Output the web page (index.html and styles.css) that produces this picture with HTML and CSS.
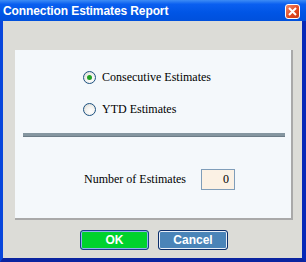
FILE: index.html
```html
<!DOCTYPE html>
<html lang="en">
<head>
  <meta charset="UTF-8" />
  <title>Connection Estimates Report</title>
  <link rel="stylesheet" href="styles.css">
</head>
<body>
  <div class="window">
    <div class="title-bar">
      <span class="title">Connection Estimates Report</span>
      <button type="button" class="close-btn">
        <svg width="9" height="9" viewBox="0 0 9 9"><path d="M1 1 L8 8 M8 1 L1 8" stroke="#fff" stroke-width="2" /></svg>
      </button>
    </div>
    <div class="client">
      <div class="panel">
        <div class="radio-group">
          <label class="radio-row"><span class="radio checked"></span><span class="serif">Consecutive Estimates</span></label>
          <label class="radio-row"><span class="radio"></span><span class="serif">YTD Estimates</span></label>
        </div>
        <div class="separator"></div>
        <div class="number-row">
          <span class="number-label serif">Number of Estimates</span>
          <input type="text" class="number-input serif" value="0" />
        </div>
      </div>
      <div class="buttons">
        <button type="button" class="btn btn-ok">OK</button>
        <button type="button" class="btn btn-cancel">Cancel</button>
      </div>
    </div>
  </div>
</body>
</html>
```

FILE: styles.css
```css
body {
  margin: 0;
  background: #ffffff;
}
.serif {
  font-family: "Liberation Serif", "DejaVu Serif", serif;
  font-size: 12px;
  color: #000;
}
.window {
  width: 306px;
  height: 262px;
  box-sizing: border-box;
  display: flex;
  flex-direction: column;
  background: #0843d8;
  border-left: 3px solid #0846dc;
  border-right: 4px solid #0628b8;
  border-bottom: 4px solid #0a24a0;
}
.title-bar {
  height: 21px;
  margin-left: -3px;
  margin-right: -4px;
  padding: 0 5px 0 3px;
  display: flex;
  align-items: center;
  justify-content: space-between;
  background: linear-gradient(#3d8cf5 0%, #0a5ff0 20%, #0055e5 60%, #0050dc 100%);
}
.title {
  color: white;
  font-family: "Liberation Sans", Arial, sans-serif;
  font-weight: bold;
  font-size: 12px;
  letter-spacing: -0.1px;
  margin-top: 1px;
}
.close-btn {
  width: 15px;
  height: 15px;
  padding: 0;
  border: 1px solid #ffffff;
  border-radius: 3px;
  background: linear-gradient(135deg, #f08a6c, #e0461e 60%, #c83a16);
  display: flex;
  align-items: center;
  justify-content: center;
  margin: 1px 1px 0 0;
}
.client {
  flex: 1;
  background: #dcdcd7;
  padding: 29px 9px 0 12px;
}
.panel {
  width: 276px;
  height: 168px;
  background: #f4f8fb;
  border-right: 2px solid #a9a9a9;
  border-bottom: 2px solid #a9a9a9;
  display: flex;
  flex-direction: column;
}
.radio-group {
  display: flex;
  flex-direction: column;
  gap: 12px;
  padding: 17px 0 0 68px;
}
.radio-row {
  height: 20px;
  display: flex;
  align-items: center;
  gap: 6px;
}
.radio {
  width: 11px;
  height: 11px;
  border: 1px solid #1c5180;
  border-radius: 50%;
  background: radial-gradient(circle at 60% 65%, #ffffff 0%, #f2f2ef 45%, #d4d3cc 100%);
  display: flex;
  align-items: center;
  justify-content: center;
}
.radio.checked::after {
  content: "";
  width: 5px;
  height: 5px;
  border-radius: 50%;
  background: #21a121;
}
.separator {
  height: 4px;
  margin: 14px 6px 0 8px;
  background: #8596a0;
  border-bottom: 1px solid #6d7d88;
  box-sizing: border-box;
}
.number-row {
  display: flex;
  align-items: center;
  margin-top: 32px;
  padding-left: 69px;
}
.number-label {
  width: 117px;
  white-space: nowrap;
}
.number-input {
  width: 34px;
  height: 21px;
  box-sizing: border-box;
  border: 1px solid #7f9db9;
  background: #fbf1e4;
  text-align: right;
  padding: 0 5px;
}
.buttons {
  display: flex;
  gap: 9px;
  margin-top: 10px;
  padding-left: 65px;
}
.btn {
  height: 20px;
  border-radius: 3px;
  font-family: "Liberation Sans", Arial, sans-serif;
  font-weight: bold;
  font-size: 12px;
  color: white;
  padding: 0;
}
.btn-ok {
  width: 69px;
  background: #00d22d;
  border: 1px solid #1d3d8c;
  box-shadow: inset 0 0 0 1px #8fb0f0;
}
.btn-cancel {
  width: 70px;
  background: #4a84b8;
  border: 1px solid #0c2e6a;
  box-shadow: inset 0 0 0 1px #e8eef8;
}
```
